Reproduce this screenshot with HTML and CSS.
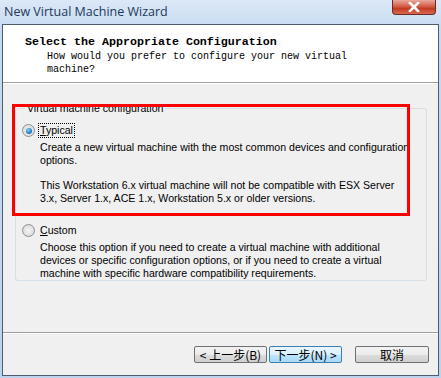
FILE: index.html
```html
<!DOCTYPE html>
<html lang="en">
<head>
  <meta charset="UTF-8">
  <title>New Virtual Machine Wizard</title>
  <link rel="stylesheet" href="styles.css">
</head>
<body>
  <div class="window">
    <div class="titlebar">
      <span class="title">New Virtual Machine Wizard</span>
      <div class="close">
        <svg width="16" height="10" viewBox="0 0 16 10"><path d="M4 1 L12 9 M12 1 L4 9" stroke="#fff" stroke-width="2.6" stroke-linecap="square"/></svg>
      </div>
    </div>

    <div class="client">
      <div class="header">
        <div class="header-title">Select the Appropriate Configuration</div>
        <div class="header-sub">How would you prefer to configure your new virtual<br>machine?</div>
      </div>

      <div class="body">
        <fieldset class="group">
          <legend>Virtual machine configuration</legend>

          <div class="option">
            <div class="opt-row">
              <span class="radio checked"></span>
              <span class="opt-label focus"><u>T</u>ypical</span>
            </div>
            <p class="desc">Create a new virtual machine with the most common devices and configuration options.</p>
            <p class="desc gap">This Workstation 6.x virtual machine will not be compatible with ESX Server 3.x, Server 1.x, ACE 1.x, Workstation 5.x or older versions.</p>
          </div>

          <div class="option custom">
            <div class="opt-row">
              <span class="radio"></span>
              <span class="opt-label"><u>C</u>ustom</span>
            </div>
            <p class="desc">Choose this option if you need to create a virtual machine with additional devices or specific configuration options, or if you need to create a virtual machine with specific hardware compatibility requirements.</p>
          </div>
        </fieldset>
        <div class="highlight"></div>
      </div>

      <div class="footer">
        <button class="btn back">&lt; 上一步(<u>B</u>)</button>
        <button class="btn next">下一步(<u>N</u>) &gt;</button>
        <button class="btn cancel">取消</button>
      </div>
    </div>
  </div>
</body>
</html>
```

FILE: styles.css
```css
/* Window frame */
body {
  margin: 0;
  width: 441px;
  height: 378px;
  overflow: hidden;
  background: #c9dcf1;
  font-family: "Liberation Sans", Arial, sans-serif;
}

.window {
  height: 378px;
  display: flex;
  flex-direction: column;
  background: linear-gradient(#dbe8f7, #c6daf1 30px, #bcd3ee);
}

.titlebar {
  height: 24px;
  position: relative;
  flex-shrink: 0;
}

.title {
  position: absolute;
  left: 4px;
  top: 3px;
  font-family: "Open Sans", "Noto Sans", sans-serif;
  font-size: 12.5px;
  color: #1e395b;
}

.close {
  position: absolute;
  left: 392px;
  top: 0;
  width: 44px;
  height: 15px;
  border: 1px solid #6b2b22;
  border-top: none;
  border-radius: 0 0 4px 4px;
  background: linear-gradient(#e9a99c, #d0553f 50%, #c23a22 60%, #d9694f);
  display: flex;
  align-items: center;
  justify-content: center;
  box-sizing: border-box;
}

.client {
  flex: 1;
  margin: 0 2px 2px 2px;
  border: 1px solid #4d5d70;
  background: #f0f0f0;
  display: flex;
  flex-direction: column;
}

/* Header */
.header {
  height: 58px;
  background: #fff;
  border-bottom: 1px solid #a0a0a0;
  box-shadow: 0 1px 0 #fff;
  box-sizing: border-box;
  padding: 10px 0 0 22px;
  font-family: "Liberation Mono", monospace;
  color: #000;
}

.header-title {
  font-size: 11.67px;
  font-weight: bold;
  line-height: 14px;
}

.header-sub {
  margin: 0 0 0 22px;
  padding-top: 1px;
  font-size: 10px;
  line-height: 13px;
}

/* Body */
.body {
  flex: 1;
  position: relative;
  padding: 19px 11px 0 12px;
}

.group {
  margin: 0;
  height: 179px;
  box-sizing: border-box;
  border: 1px solid #d5dfe5;
  border-radius: 3px;
  padding: 9px 6px 0 6px;
}

.group legend {
  font-size: 10.6px;
  color: #000;
  padding: 0 2px;
  margin-left: 3px;
}

.option {
  font-size: 10.6px;
  color: #000;
}

.opt-row {
  display: flex;
  align-items: center;
  height: 15px;
}

.radio {
  width: 11px;
  height: 11px;
  border-radius: 50%;
  border: 1px solid #8e8f8f;
  background: radial-gradient(circle, #f4f4f4, #d4d4d4);
  margin-right: 3px;
  position: relative;
}

.radio.checked::after {
  content: "";
  position: absolute;
  left: 2.5px;
  top: 2.5px;
  width: 6px;
  height: 6px;
  border-radius: 50%;
  background: radial-gradient(circle at 40% 35%, #8fd0f3, #1b7fc0 60%, #0d4f87);
}

.opt-label {
  padding: 0 1px;
  line-height: 13px;
  border: 1px solid transparent;
}

.opt-label.focus {
  border: 1px dotted #000;
}

.desc {
  margin: 3px 0 0 18px;
  line-height: 13px;
  width: 372px;
}

.desc.gap {
  margin-top: 12px;
}

.custom {
  margin-top: 18px;
}

.custom .desc {
  width: 352px;
}

/* Annotation box */
.highlight {
  position: absolute;
  left: 9px;
  top: 21px;
  width: 392px;
  height: 106px;
  border: 3px solid #ff0000;
}

/* Footer */
.footer {
  height: 43px;
  border-top: 1px solid #a0a0a0;
  box-shadow: inset 0 1px 0 #fff;
  box-sizing: border-box;
  display: flex;
  align-items: flex-start;
  padding: 13px 0 0 191px;
}

.btn {
  height: 17px;
  padding: 0;
  font-family: "Noto Sans CJK SC", sans-serif;
  font-size: 12px;
  line-height: 14px;
  color: #000;
  border: 1px solid #707070;
  border-radius: 2px;
  background: linear-gradient(#f2f2f2, #ebebeb 50%, #dddddd 50%, #cfcfcf);
}

.btn u {
  text-decoration: none;
}

.back {
  width: 73px;
}

.next {
  width: 73px;
  margin-left: 2px;
  border-color: #3c7fb1;
  background: linear-gradient(#eaf6fd, #d9f0fc 50%, #bee6fd 50%, #a7d9f5);
}

.cancel {
  width: 74px;
  margin-left: 13px;
}
```
